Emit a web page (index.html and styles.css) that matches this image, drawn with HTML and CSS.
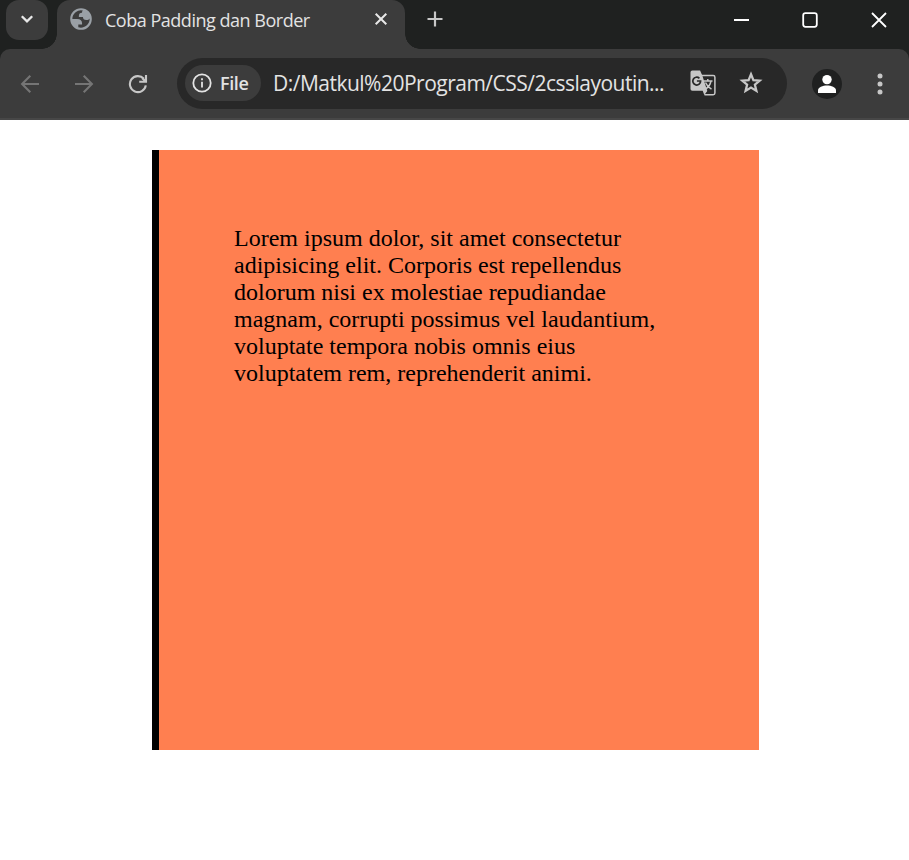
FILE: index.html
```html
<!DOCTYPE html>
<html lang="id">
<head>
<meta charset="utf-8">
<title>Coba Padding dan Border</title>
<link rel="stylesheet" href="styles.css">
</head>
<body>
<header class="browser">
  <div class="tabstrip">
    <button class="tab-search" aria-label="Search tabs">
      <svg width="42" height="40" viewBox="0 0 42 40"><path d="M15.8 16.2l5.2 5.2 5.2-5.2" fill="none" stroke="#e8e8e8" stroke-width="2.3"/></svg>
    </button>
    <div class="tab">
      <svg class="globe" width="24" height="24" viewBox="0.9 0.9 22.2 22.2"><path fill="#9aa0a6" fill-rule="evenodd" d="M12 2a10 10 0 1 0 0 20 10 10 0 0 0 0-20zM4 12h4.4c3.407.022 4.922 1.73 4.543 5.127H9.488v2.47a8.004 8.004 0 0 0 10.498-8.08C19.327 12.508 18.332 13 17 13c-2.137 0-3.206-.916-3.206-2.75h-3.748c-.274-2.728.683-4.092 2.87-4.092 0-.975.327-1.597.811-1.97A8.004 8.004 0 0 0 4 12z"/></svg>
      <span class="tab-title">Coba Padding dan Border</span>
      <svg class="close" width="14" height="14" viewBox="0 0 14 14"><path d="M1.7 1.7l10.6 10.6M12.3 1.7L1.7 12.3" stroke="#e8e8e8" stroke-width="2"/></svg>
    </div>
    <svg class="new-tab" width="16" height="16" viewBox="0 0 16 16"><path d="M8 .5v15M.5 8h15" stroke="#c7c7c7" stroke-width="2.2"/></svg>
    <div class="window-controls">
      <svg width="16" height="16" viewBox="0 0 16 16"><path d="M1 8h15" stroke="#fff" stroke-width="2"/></svg>
      <svg width="16" height="16" viewBox="0 0 16 16"><rect x="1.2" y="1.2" width="13.6" height="13.6" rx="2.2" fill="none" stroke="#fff" stroke-width="1.8"/></svg>
      <svg width="16" height="16" viewBox="0 0 16 16"><path d="M1 1l14 14M15 1L1 15" stroke="#fff" stroke-width="1.8"/></svg>
    </div>
  </div>
  <div class="toolbar">
    <svg class="nav dim" width="20" height="20" viewBox="0 0 20 20"><path d="M19 10H2.5M10.3 1.8L2.1 10l8.2 8.2"/></svg>
    <svg class="nav dim" width="20" height="20" viewBox="0 0 20 20"><path d="M1 10h16.5M9.7 1.8l8.2 8.2-8.2 8.2"/></svg>
    <svg class="nav" width="20" height="20" viewBox="0 0 20 20"><path d="M17.8 11.4A8 8 0 1 1 15.9 4.8M18 1v6.8h-6.8M17.5 7.3L14 3.9"/></svg>
    <div class="omnibox">
      <div class="chip">
        <svg width="20" height="20" viewBox="0 0 20 20"><circle cx="10" cy="10" r="8.7" fill="none" stroke="#e3e3e3" stroke-width="1.8"/><path d="M10 8.8v5.7M10 5.2v2" stroke="#e3e3e3" stroke-width="1.8"/></svg>
        <span>File</span>
      </div>
      <span class="url">D:/Matkul%20Program/CSS/2csslayoutin...</span>
      <svg class="translate" width="26" height="26" viewBox="0 0 26 26"><path d="M10 5.6h13.2q1.7 0 1.7 1.7v15.8q0 1.7-1.7 1.7H14.5" fill="none" stroke="#c7c7c7" stroke-width="1.5"/><path d="M2.3.5h7.8l2.2 5 5 15.5-3 4-1.6-4.2H2.3Q.5 20.8.5 19V2.3Q.5.5 2.3.5z" fill="#c7c7c7"/><path d="M9.4 8.3A3.9 3.9 0 1 0 10.6 11H6.9" fill="none" stroke="#282828" stroke-width="1.7"/><path d="M13.5 11h9M17.8 9v2M21 11c-.7 3.7-2.7 6.3-5.3 8M15.5 12.5c1.1 2.8 3.2 5 6 6.7" fill="none" stroke="#c7c7c7" stroke-width="1.5"/></svg>
      <svg class="star" width="24" height="24" viewBox="0 0 24 24"><path d="M12 3.2l2.4 5.9 6.3.5-4.8 4.1 1.5 6.2-5.4-3.3-5.4 3.3 1.5-6.2-4.8-4.1 6.3-.5z" fill="none" stroke="#c7c7c7" stroke-width="2.3"/></svg>
    </div>
    <svg class="profile" width="30" height="30" viewBox="0 0 30 30"><circle cx="15" cy="15" r="15" fill="#1f2020"/><circle cx="15" cy="10.6" r="4.7" fill="#fff"/><path d="M6 24v-2.4c0-3.3 4.8-5 9-5s9 1.7 9 5V24z" fill="#fff"/></svg>
    <svg class="menu" width="6" height="22" viewBox="0 0 6 22"><g fill="#c7c7c7"><circle cx="3" cy="3" r="2.5"/><circle cx="3" cy="11" r="2.5"/><circle cx="3" cy="19" r="2.5"/></g></svg>
  </div>
</header>
<main class="box">Lorem ipsum dolor, sit amet consectetur adipisicing elit. Corporis est repellendus dolorum nisi ex molestiae repudiandae magnam, corrupti possimus vel laudantium, voluptate tempora nobis omnis eius voluptatem rem, reprehenderit animi.</main>
</body>
</html>
```
FILE: styles.css
```css
* { box-sizing: border-box; }
body { margin: 0; background: #fff; overflow: hidden; }
svg { display: block; flex: none; }
.browser {
  height: 120px;
  background: #1f2120;
  font-family: "Open Sans", "Noto Sans", sans-serif;
  color: #e3e3e3;
}
.tabstrip { height: 49px; display: flex; align-items: flex-start; }
.tab-search {
  width: 42px; height: 40px; margin-left: 6px; padding: 0;
  border: 0; border-radius: 13px; background: #3c3c3c;
}
.tab {
  position: relative;
  display: flex; align-items: center;
  width: 348px; height: 49px; margin-left: 9px; padding: 0 17px 11px 12px;
  background: #3c3c3c; border-radius: 13px 13px 0 0;
}
.tab::before, .tab::after {
  content: ""; position: absolute; bottom: 0; width: 15px; height: 15px;
}
.tab::before { left: -15px; background: radial-gradient(circle at 0 0, transparent 14.5px, #3c3c3c 15px); }
.tab::after { right: -15px; background: radial-gradient(circle at 100% 0, transparent 14.5px, #3c3c3c 15px); }
.tab-title { margin-left: 12px; flex: 1; font-size: 18px; line-height: 24px; white-space: nowrap; letter-spacing: -0.48px; padding-top: 1px; }
.new-tab { margin: 11px 0 0 22px; }
.window-controls { display: flex; gap: 53px; margin: 12px 22px 0 auto; }
.toolbar {
  height: 71px; display: flex; align-items: center;
  padding: 0 26px 0 20px;
  background: #3c3c3c; border-bottom: 2px solid #474747;
  border-radius: 10px 10px 0 0;
}
.nav { margin-right: 34px; fill: none; stroke: #c7c7c7; stroke-width: 2.1; }
.nav.dim { stroke: #757575; }
.omnibox {
  width: 610px; height: 51px; margin: -1px 0 0 -5px; padding: 0 23px 0 8px;
  display: flex; align-items: center;
  border-radius: 26px; background: #282828;
}
.chip {
  width: 76px; height: 36px; padding-left: 7px;
  display: flex; align-items: center; gap: 8px;
  border-radius: 18px; background: #3c3c3c;
  font-size: 18px; font-weight: 600; letter-spacing: -0.4px;
}
.url { width: 406px; margin-left: 12px; font-size: 21px; letter-spacing: -0.51px; white-space: nowrap; }
.translate { margin-left: 11px; }
.star { margin-left: 23px; }
.profile { margin-left: 25px; }
.menu { margin-left: auto; }
.box {
  width: 607px; height: 600px; margin: 30px 0 0 152px; padding: 75px;
  border-left: 7px solid #000; background: coral;
  color: #000; font: 24px/27px "Liberation Serif", serif;
}
```
